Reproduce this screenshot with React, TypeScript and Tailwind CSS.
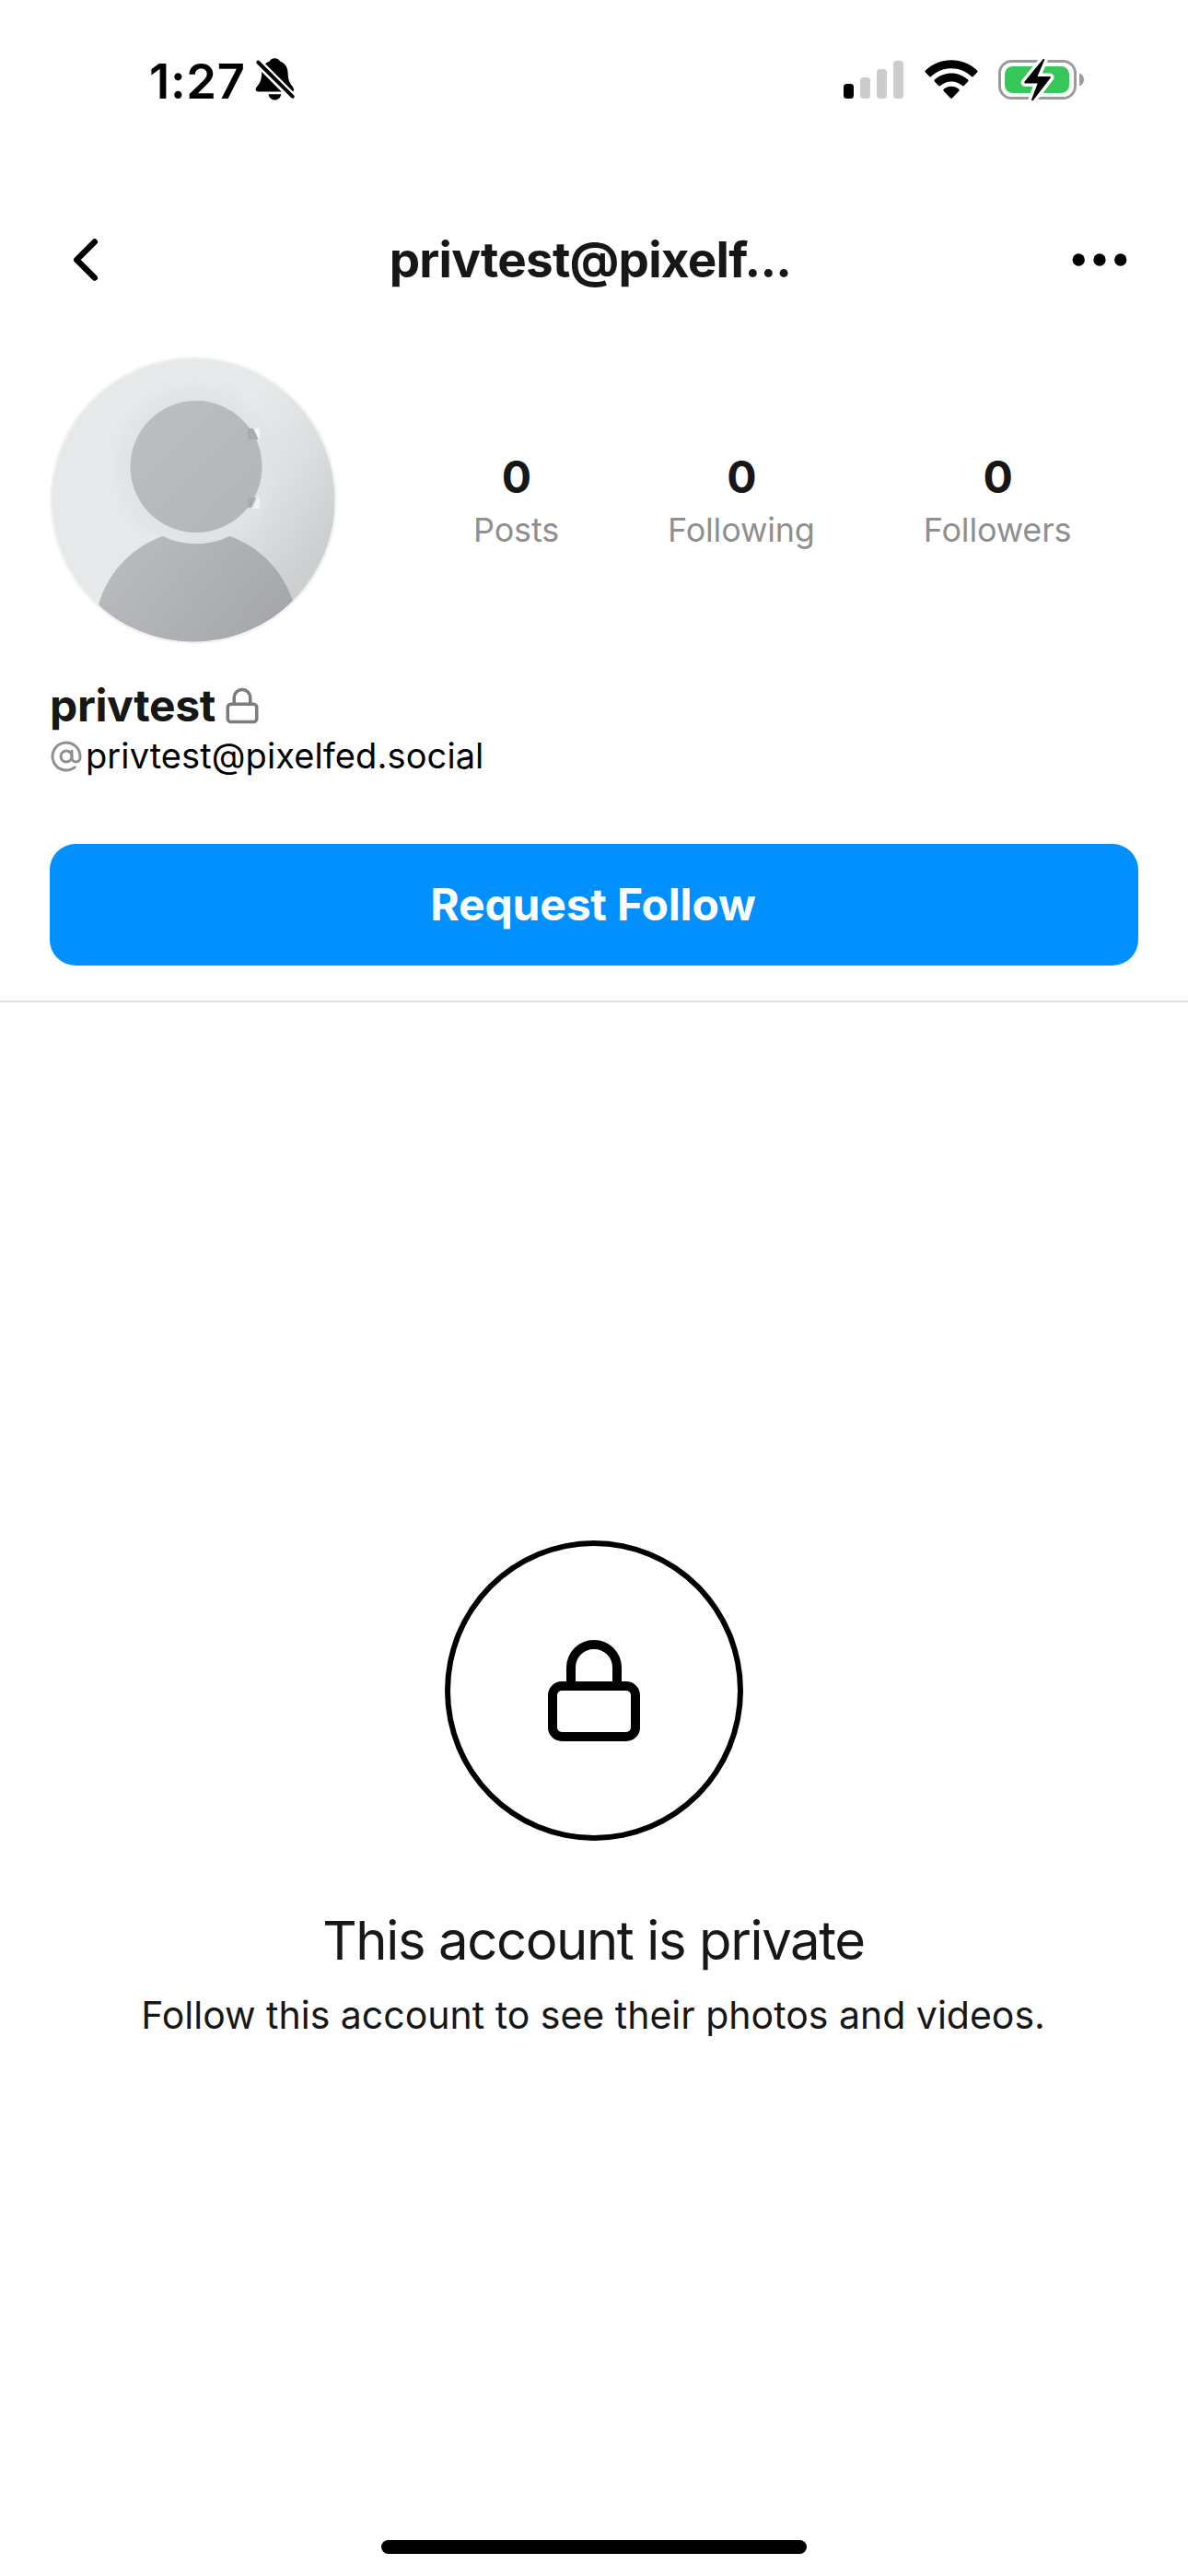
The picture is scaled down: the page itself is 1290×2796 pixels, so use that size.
import React from "react";

function BellOff() {
  return (
    <svg className="ml-[10px] mt-[4px] h-[48px] w-[44px]" viewBox="277 64 44 48" fill="none">
      <path
        d="M298.3 65.3c3 0 5 1.5 5.6 3.3 5 1.5 8.400 6 8.700 12.500.200 6 .900 9 3.200 12.300 1.800 2.500 3.300 4 3.300 5.800 0 1.900-1.200 2.400-3.200 2.400h-35c-2 0-3.200-.700-3.200-2.500 0-2.100 1.700-3.500 3.400-5.900 2.200-3.200 2.900-6.300 3.100-12.100.300-6.500 3.500-11 8.500-12.500.700-1.800 2.600-3.300 5.600-3.300z"
        fill="#000"
      />
      <path d="M291.500 104.200h13.800c-.6 3.800-3.300 6.300-6.900 6.300s-6.300-2.500-6.900-6.300z" fill="#000" />
      <path d="M276 65.500 322 111.500" stroke="#fff" strokeWidth="9" />
      <path d="M280.200 69.500 317.800 106.800" stroke="#000" strokeWidth="3.900" strokeLinecap="round" />
    </svg>
  );
}

function Signal() {
  return (
    <div className="flex h-[41px] items-end gap-[7px]">
      <span className="h-[16px] w-[11px] rounded-[3.5px] bg-black" />
      <span className="h-[23px] w-[11px] rounded-[3.5px] bg-[#cccccc]" />
      <span className="h-[32px] w-[11px] rounded-[3.5px] bg-[#cccccc]" />
      <span className="h-[41px] w-[11px] rounded-[3.5px] bg-[#cccccc]" />
    </div>
  );
}

function Wifi() {
  return (
    <svg className="h-[43px] w-[58px]" viewBox="1003.500 65 58 43" fill="#000">
      <path d="M1032.500 65.300c11 0 20.800 4.200 28.100 11.300.6.600.6 1.400 0 2l-4.300 4.400c-.6.600-1.400.6-2 0-5.800-5.500-13.400-8.700-21.800-8.700s-16 3.200-21.800 8.700c-.6.600-1.400.6-2 0l-4.300-4.400c-.6-.600-.6-1.400 0-2 7.300-7.100 17.100-11.300 28.100-11.300z" />
      <path d="M1032.500 79.500c7 0 13.400 2.700 18.100 7.100.6.600.6 1.400 0 2l-4.300 4.400c-.6.600-1.300.6-1.900.1-3.200-2.900-7.300-4.600-11.900-4.600s-8.700 1.700-11.900 4.600c-.6.500-1.300.500-1.900-.1l-4.300-4.400c-.6-.600-.6-1.400 0-2 4.700-4.400 11.100-7.100 18.100-7.100z" />
      <path d="M1032.500 93.800c3.100 0 6 1.100 8.200 3 .7.600.7 1.400.1 2l-7.300 7.700c-.6.600-1.400.6-2 0l-7.300-7.700c-.6-.600-.6-1.400.1-2 2.200-1.900 5.100-3 8.200-3z" />
    </svg>
  );
}

function Battery() {
  const bolt = "M1132.300 64.500 1112.600 88.600c-.8 1-.3 1.900.8 1.900h13.300l-6.500 17.200c-.5 1.500 1 2 2 .900l18.400-23.800c.8-1 .3-1.900-.8-1.900h-13.300l7.500-17.300c.6-1.500-.8-2.200-1.700-1.100z";
  return (
    <svg className="h-[48px] w-[95px]" viewBox="1083 62 95 48" fill="none">
      <rect x="1085.500" y="66.500" width="82" height="40" rx="13" stroke="#9b9b9b" strokeWidth="3" />
      <rect x="1091" y="72" width="70" height="29" rx="8.500" fill="#35c759" />
      <path d="M1172 79.500c3 1 5 3.800 5 7s-2 6-5 7z" fill="#9b9b9b" />
      <path d={bolt} fill="#fff" stroke="#fff" strokeWidth="7" strokeLinejoin="round" />
      <path d={bolt} fill="#000" />
    </svg>
  );
}

function Lock({ className }: { className: string }) {
  return (
    <svg className={className} viewBox="0 0 24 24" fill="none" stroke="currentColor" strokeWidth="2" strokeLinecap="round" strokeLinejoin="round">
      <rect x="3" y="11" width="18" height="11" rx="2" />
      <path d="M7 11V7a5 5 0 0 1 10 0v4" />
    </svg>
  );
}

function Avatar() {
  return (
    <svg className="h-[312px] w-[312px] shrink-0" viewBox="0 0 312 312">
      <defs>
        <clipPath id="avatar-clip">
          <circle cx="156" cy="156" r="153.500" />
        </clipPath>
        <linearGradient id="avatar-bg" gradientUnits="userSpaceOnUse" x1="190" y1="100" x2="310" y2="185">
          <stop offset="0" stopColor="#e5e9ea" />
          <stop offset="0.5" stopColor="#dcdfe0" />
          <stop offset="1" stopColor="#cbcfd0" />
        </linearGradient>
        <radialGradient id="avatar-halo" gradientUnits="userSpaceOnUse" cx="159" cy="119.500" r="92">
          <stop offset="0.8" stopColor="#e0e2e7" stopOpacity="0.9" />
          <stop offset="0.9" stopColor="#e0e2e7" stopOpacity="0.55" />
          <stop offset="1" stopColor="#e0e2e7" stopOpacity="0" />
        </radialGradient>
        <linearGradient id="avatar-head" gradientUnits="userSpaceOnUse" x1="100" y1="60" x2="220" y2="180">
          <stop offset="0" stopColor="#bcbdc1" />
          <stop offset="1" stopColor="#b3b5b9" />
        </linearGradient>
        <linearGradient id="avatar-body" gradientUnits="userSpaceOnUse" x1="90" y1="200" x2="230" y2="310">
          <stop offset="0" stopColor="#b9babe" />
          <stop offset="1" stopColor="#a6a7ab" />
        </linearGradient>
      </defs>
      <circle cx="156" cy="156" r="156" fill="#f2f2f2" />
      <g clipPath="url(#avatar-clip)">
        <rect width="312" height="312" fill="url(#avatar-bg)" />
        <circle cx="159" cy="119.500" r="92" fill="url(#avatar-halo)" />
        <path d="M122.700 195A84 84 0 0 0 195.300 195A110 110 0 0 1 269 299V312H49V299A110 110 0 0 1 122.700 195z" fill="url(#avatar-body)" />
        <circle cx="159" cy="119.500" r="71.500" fill="url(#avatar-head)" />
        <path d="M215 78h6l6 12h-12z" fill="#a9abae" />
        <path d="M221.500 78h6.500v12h-1.500q-2-6-5-12z" fill="#f5f6f7" />
        <path d="M215 153h9l-5 11h-4z" fill="#a9abae" />
        <path d="M225.500 153h2.500v12h-8q3.500-5 5.500-12z" fill="#f0f1f2" />
      </g>
    </svg>
  );
}

const stats = [
  { value: "0", label: "Posts" },
  { value: "0", label: "Following" },
  { value: "0", label: "Followers" },
];

export default function App() {
  return (
    <div className="flex h-[2796px] w-[1290px] flex-col overflow-hidden whitespace-nowrap bg-white font-['Inter',sans-serif] text-[#171717]">
      {/* Status bar */}
      <div className="flex h-[242px] items-start justify-between pl-[162px] pr-[112px]">
        <div className="flex pt-[58px] text-black">
          <span className="text-[52.500px] font-semibold leading-[60px] tracking-[0.7px]">1:27</span>
          <BellOff />
        </div>
        <div className="flex items-start pt-[62px]">
          <div className="pt-[4px]">
            <Signal />
          </div>
          <div className="ml-[22.500px] pt-[3px]">
            <Wifi />
          </div>
          <div className="ml-[21.500px]">
            <Battery />
          </div>
        </div>
      </div>

      {/* Navigation header */}
      <div className="flex h-[80px] items-center pl-[54px] pr-[57px]">
        <svg className="size-[78px]" viewBox="0 0 24 24" fill="none" stroke="#000" strokeWidth="2" strokeLinecap="round" strokeLinejoin="round">
          <path d="M15 18l-6-6 6-6" />
        </svg>
        <h1 className="flex-1 pr-[5px] text-center text-[53px] font-bold leading-[64px] tracking-[-0.770px]">privtest@pixelf...</h1>
        <svg className="size-[78px]" viewBox="0 0 24 24" fill="#000">
          <circle cx="5" cy="12" r="2.050" />
          <circle cx="12" cy="12" r="2.050" />
          <circle cx="19" cy="12" r="2.050" />
        </svg>
      </div>

      {/* Profile summary */}
      <div className="mt-[65px] flex items-start px-[54px]">
        <Avatar />
        <div className="ml-[148px] mt-[103px] flex gap-[118px]">
          {stats.map((s) => (
            <div key={s.label} className="flex flex-col items-center">
              <span className="pl-px text-[48px] font-bold leading-[56px]">{s.value}</span>
              <span className="mt-[7px] text-[36px] leading-[44px] tracking-[-0.170px] text-[#8f8f8f]">{s.label}</span>
            </div>
          ))}
        </div>
      </div>

      <div className="mt-[39px] px-[54px]">
        <div className="flex items-center">
          <span className="text-[48px] font-bold leading-[56px] tracking-[-0.380px]">privtest</span>
          <Lock className="ml-[8px] size-[42px] text-[#7c7c7c]" />
        </div>
        <div className="mt-[2px] flex items-center">
          <svg className="mt-[2px] size-[36px]" viewBox="0 0 24 24" fill="none" stroke="#8f8f8f" strokeWidth="2" strokeLinecap="round" strokeLinejoin="round">
            <circle cx="12" cy="12" r="4" />
            <path d="M16 8v5a3 3 0 0 0 6 0v-1a10 10 0 1 0-3.920 7.940" />
          </svg>
          <span className="ml-[3px] text-[38px] leading-[48px] tracking-[0.100px] text-black">privtest@pixelfed.social</span>
        </div>
        <button className="mt-[72px] flex h-[132px] w-full items-center justify-center rounded-[28px] bg-[#0090ff] pr-[2px] text-[48px] font-bold tracking-[-0.190px] text-white">
          Request Follow
        </button>
      </div>

      <div className="mt-[38px] h-[2px] shrink-0 bg-[#e1e1e1]" />

      {/* Private account notice */}
      <div className="mt-[584px] flex flex-col items-center">
        <div className="flex h-[326px] w-[324px] items-center justify-center rounded-[50%] border-[6px] border-black">
          <Lock className="size-[120px] text-black" />
        </div>
        <h2 className="mt-[72px] pr-px text-[58px] leading-[72px] tracking-[-1.400px]">This account is private</h2>
        <p className="mt-[20px] pr-[2px] text-[41px] leading-[50px]">Follow this account to see their photos and videos.</p>
      </div>

      <div className="mx-auto mb-[24px] mt-auto h-[15px] w-[462px] rounded-full bg-black" />
    </div>
  );
}
